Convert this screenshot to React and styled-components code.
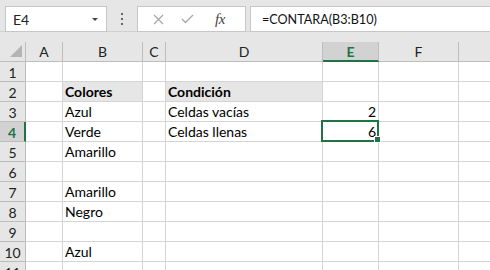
import styled, { createGlobalStyle, css } from 'styled-components';

const GlobalStyle = createGlobalStyle`
  html, body { margin: 0; padding: 0; background: #fff; }
  body { font-family: Lato, "Liberation Sans", sans-serif; overflow: hidden; }
`;

const green = '#217346';
const gridLine = '#d4d4d4';
const headerLine = '#bdbdbd';

const Window = styled.div`
  width: 490px;
  height: 270px;
  overflow: hidden;
  background: #e6e6e6;
`;

const FormulaBar = styled.div`
  display: flex;
  align-items: flex-start;
  height: 32px;
  box-sizing: border-box;
  padding: 6px 0 0 5px;
  border-bottom: 1px solid #d0d0d0;
`;

const Box = styled.div`
  height: 26px;
  box-sizing: border-box;
  border: 1px solid #c6c6c6;
  background: #fff;
  display: flex;
  align-items: center;
`;

const NameBox = styled(Box)`
  width: 102px;
  justify-content: space-between;
  padding: 0 8px 0 7px;
  font-size: 14px;
  color: #222;
`;

const Arrow = styled.span`
  width: 0;
  height: 0;
  border-left: 3px solid transparent;
  border-right: 3px solid transparent;
  border-top: 3px solid #444;
  margin-top: 1px;
`;

const Grip = styled.div`
  width: 30px;
  height: 26px;
  display: flex;
  flex-direction: column;
  align-items: center;
  justify-content: center;
  gap: 3px;
  > span {
    width: 2px;
    height: 2px;
    background: #666;
  }
`;

const IconBox = styled(Box)`
  width: 109px;
  padding-left: 13px;
`;

const IconSlot = styled.span`
  display: flex;
  align-items: center;
  justify-content: center;
  width: ${(p) => p.w}px;
`;

const Fx = styled.span`
  font-family: "Liberation Serif", serif;
  font-style: italic;
  font-size: 15px;
  color: #444;
  letter-spacing: -0.5px;
`;

const FormulaInput = styled(Box)`
  flex: 1;
  margin-left: 4px;
  border-right: none;
  padding-left: 11px;
  font-size: 12.6px;
  color: #111;
`;

const Sheet = styled.div`
  margin-top: 10px;
  display: grid;
  grid-template-columns: 26px 37px 80px 23px 157px 56px 80px 100px;
  grid-auto-rows: 20px;
  background: #fff;
`;

const Corner = styled.div`
  background: #e6e6e6;
  border-right: 1px solid ${headerLine};
  border-bottom: 1px solid ${headerLine};
  box-sizing: border-box;
  display: flex;
  align-items: flex-end;
  justify-content: flex-end;
  padding: 0 3px 4px 0;
`;

const ColHeader = styled.div`
  box-sizing: border-box;
  background: ${(p) => (p.active ? '#d2d2d2' : '#e6e6e6')};
  border-right: 1px solid ${headerLine};
  border-bottom: ${(p) => (p.active ? `2px solid ${green}` : `1px solid ${headerLine}`)};
  display: flex;
  align-items: center;
  justify-content: center;
  padding-top: ${(p) => (p.active ? 1 : 0)}px;
  font-size: 14px;
  color: ${(p) => (p.active ? green : '#222')};
  font-weight: ${(p) => (p.active ? 700 : 400)};
`;

const RowHeader = styled.div`
  box-sizing: border-box;
  background: ${(p) => (p.active ? '#d2d2d2' : '#e6e6e6')};
  border-right: ${(p) => (p.active ? `2px solid ${green}` : `1px solid ${headerLine}`)};
  border-bottom: 1px solid ${headerLine};
  display: flex;
  align-items: center;
  justify-content: center;
  padding-top: 2px;
  font-size: 14px;
  color: ${(p) => (p.active ? green : '#222')};
  font-weight: ${(p) => (p.active ? 700 : 400)};
`;

const Cell = styled.div`
  position: relative;
  box-sizing: border-box;
  border-right: 1px solid ${gridLine};
  border-bottom: 1px solid ${gridLine};
  display: flex;
  align-items: flex-end;
  justify-content: ${(p) => (p.num ? 'flex-end' : 'flex-start')};
  padding: 0 2px 1px 2px;
  line-height: 17px;
  font-size: 14px;
  color: #000;
  white-space: nowrap;
  ${(p) => p.fill && css`background: #e7e6e6;`}
  ${(p) => p.bold && css`font-weight: 700;`}
`;

const Selection = styled.div`
  position: absolute;
  z-index: 2;
  top: -2px;
  left: -2px;
  right: -1px;
  bottom: -1px;
  border: 2px solid ${green};
  pointer-events: none;
`;

const Handle = styled.span`
  position: absolute;
  right: -4px;
  bottom: -3px;
  width: 7px;
  height: 7px;
  box-sizing: border-box;
  background: ${green};
  border: 1px solid #fff;
`;

const columns = ['A', 'B', 'C', 'D', 'E', 'F', 'G'];

const data = {
  2: { B: { v: 'Colores', bold: true, fill: true }, D: { v: 'Condición', bold: true, fill: true } },
  3: { B: { v: 'Azul' }, D: { v: 'Celdas vacías' }, E: { v: '2', num: true } },
  4: { B: { v: 'Verde' }, D: { v: 'Celdas llenas' }, E: { v: '6', num: true } },
  5: { B: { v: 'Amarillo' } },
  7: { B: { v: 'Amarillo' } },
  8: { B: { v: 'Negro' } },
  10: { B: { v: 'Azul' } },
};

const active = { col: 'E', row: 4 };

const XIcon = () => (
  <svg width="11" height="11" viewBox="0 0 11 11">
    <path d="M1 1 L10 10 M10 1 L1 10" stroke="#a6a6a6" strokeWidth="1.2" fill="none" />
  </svg>
);

const CheckIcon = () => (
  <svg width="13" height="10" viewBox="0 0 13 10">
    <path d="M1 5 L4.5 8.5 L12 1" stroke="#a6a6a6" strokeWidth="1.3" fill="none" />
  </svg>
);

const CornerMark = () => (
  <svg width="12" height="12" viewBox="0 0 12 12">
    <polygon points="12,0 12,12 0,12" fill="#b4b4b4" />
  </svg>
);

const App = () => {
  const rows = Array.from({ length: 11 }, (_, i) => i + 1);
  return (
    <Window>
      <GlobalStyle />
      <FormulaBar>
        <NameBox>
          <span>E4</span>
          <Arrow />
        </NameBox>
        <Grip>
          <span />
          <span />
          <span />
        </Grip>
        <IconBox>
          <IconSlot w={14}><XIcon /></IconSlot>
          <IconSlot w={44}><CheckIcon /></IconSlot>
          <IconSlot w={22}><Fx>fx</Fx></IconSlot>
        </IconBox>
        <FormulaInput>=CONTARA(B3:B10)</FormulaInput>
      </FormulaBar>
      <Sheet>
        <Corner><CornerMark /></Corner>
        {columns.map((c) => (
          <ColHeader key={c} active={c === active.col}>{c}</ColHeader>
        ))}
        {rows.map((r) => [
          <RowHeader key={`h${r}`} active={r === active.row}>{r}</RowHeader>,
          ...columns.map((c) => {
            const d = (data[r] && data[r][c]) || {};
            const sel = r === active.row && c === active.col;
            return (
              <Cell key={`${c}${r}`} num={d.num} bold={d.bold} fill={d.fill}>
                {d.v}
                {sel && (
                  <Selection>
                    <Handle />
                  </Selection>
                )}
              </Cell>
            );
          }),
        ])}
      </Sheet>
    </Window>
  );
};

export default App;
